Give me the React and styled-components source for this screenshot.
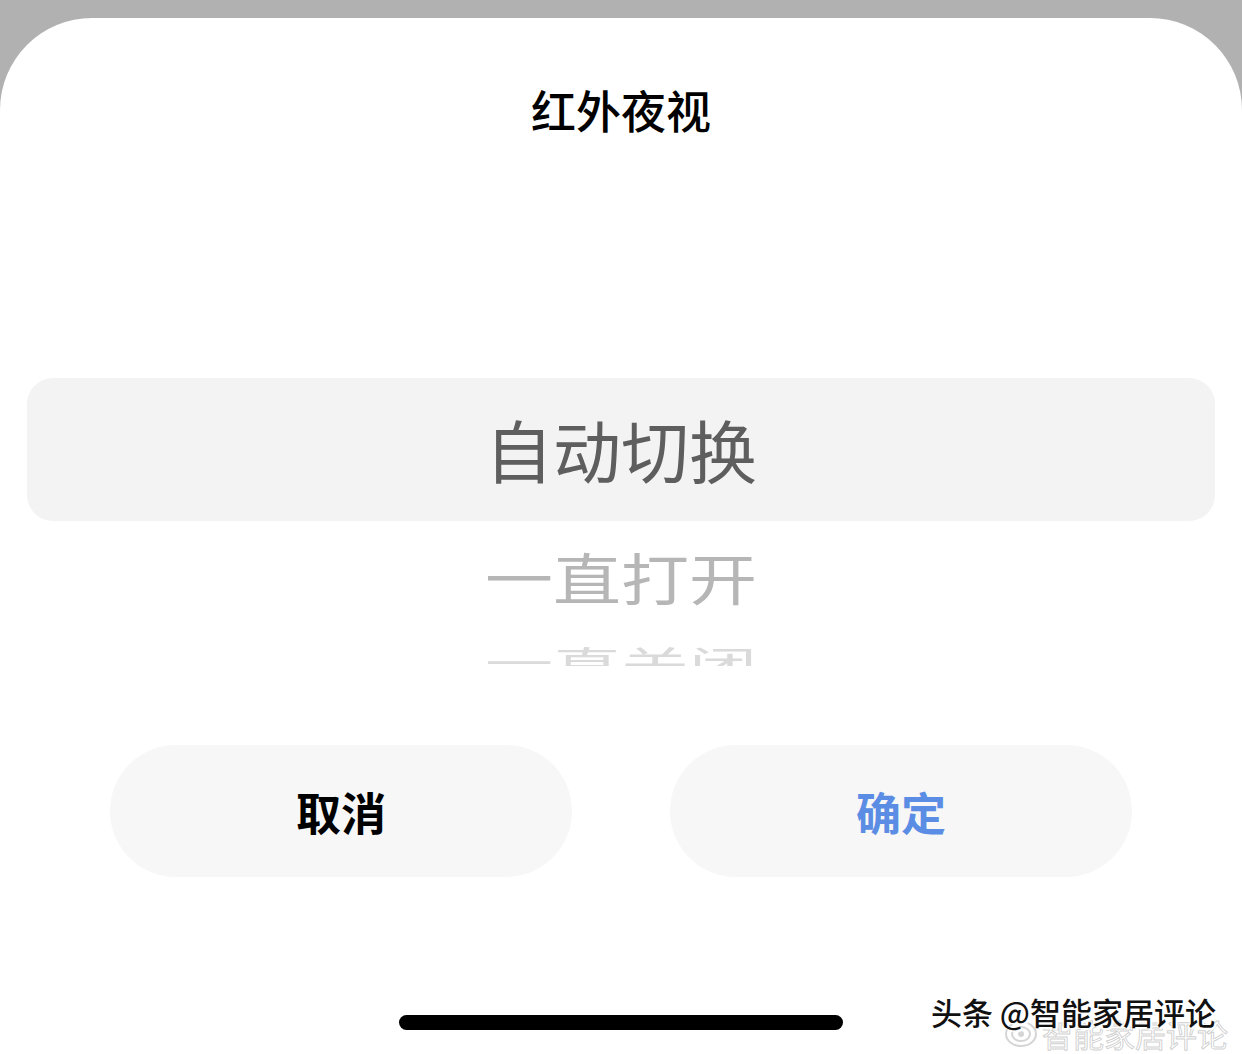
import styled, { createGlobalStyle } from "styled-components";

const GlobalStyle = createGlobalStyle`
  html, body {
    margin: 0;
    padding: 0;
    background: #b1b1b1;
    overflow: hidden;
  }
  body {
    font-family: "Noto Sans CJK SC", "Noto Sans", sans-serif;
  }
`;

const Sheet = styled.div`
  position: relative;
  margin-top: 18px;
  height: 1036px;
  background: #ffffff;
  border-radius: 92px 92px 0 0;
  display: flex;
  flex-direction: column;
  align-items: center;
  overflow: hidden;
`;

const Title = styled.div`
  padding-top: 66px;
  height: 118px;
  line-height: 52px;
  font-size: 45px;
  font-weight: 500;
  color: #000;
`;

// wheel picker: selected row sits on a grey band, the rest shrink and fade
const Picker = styled.div`
  align-self: stretch;
  height: 464px;
  padding-top: 176px;
  box-sizing: border-box;
  display: flex;
  flex-direction: column;
  overflow: hidden;
`;

const Selected = styled.div`
  flex: none;
  margin: 0 27px;
  height: 143px;
  border-radius: 26px;
  background: #f3f3f3;
  display: flex;
  align-items: center;
  justify-content: center;
  padding-bottom: 3px;
  box-sizing: border-box;
  font-size: 68px;
  color: #5e5e5e;
`;

const Option = styled.div`
  flex: none;
  height: ${({ $h }) => $h}px;
  display: flex;
  align-items: center;
  justify-content: center;
  font-size: 68px;
  color: ${({ $color }) => $color};
  transform: scaleY(${({ $scale }) => $scale});
`;

const Actions = styled.div`
  margin-top: 79px;
  display: flex;
  gap: 98px;
`;

const ActionButton = styled.button`
  width: 462px;
  height: 132px;
  border: none;
  border-radius: 66px;
  background: #f7f7f7;
  font-family: inherit;
  font-size: 45px;
  font-weight: 700;
  color: ${({ $primary }) => ($primary ? "#5b8de4" : "#000")};
  padding: 0;
`;

const HomeBar = styled.div`
  margin-top: 138px;
  width: 444px;
  height: 15px;
  border-radius: 8px;
  background: #000;
`;

const Mark = styled.div`
  position: absolute;
  right: 26px;
  bottom: 24px;
  font-size: 31px;
  line-height: 36px;
  font-weight: 500;
  color: #111;
  white-space: nowrap;
  text-shadow: 1px 1px 0 #fff, -1px -1px 0 #fff, 2px 2px 1px #fff;
`;

const MarkGhost = styled.div`
  position: absolute;
  right: 14px;
  bottom: 2px;
  display: flex;
  align-items: center;
  gap: 4px;
  font-size: 31px;
  line-height: 36px;
  color: rgba(255, 255, 255, 0.9);
  -webkit-text-stroke: 1px rgba(150, 150, 150, 0.45);
  white-space: nowrap;
`;

const options = [
  { label: "一直打开", h: 108, scale: 0.82, color: "#b6b6b6" },
  { label: "一直关闭", h: 64, scale: 0.5, color: "#dadada" },
];

export default function App() {
  return (
    <>
      <GlobalStyle />
      <Sheet>
        <Title>红外夜视</Title>
        <Picker>
          <Selected>自动切换</Selected>
          {options.map((o) => (
            <Option key={o.label} $h={o.h} $scale={o.scale} $color={o.color}>
              {o.label}
            </Option>
          ))}
        </Picker>
        <Actions>
          <ActionButton>取消</ActionButton>
          <ActionButton $primary>确定</ActionButton>
        </Actions>
        <HomeBar />
        <MarkGhost>
          <svg width="34" height="30" viewBox="0 0 34 30">
            <ellipse cx="17" cy="15" rx="15" ry="12" fill="none" stroke="rgba(150,150,150,0.4)" strokeWidth="2" />
            <ellipse cx="17" cy="15" rx="9" ry="7" fill="none" stroke="rgba(150,150,150,0.4)" strokeWidth="2" />
            <circle cx="17" cy="15" r="3" fill="rgba(150,150,150,0.4)" />
          </svg>
          智能家居评论
        </MarkGhost>
        <Mark>头条 @智能家居评论</Mark>
      </Sheet>
    </>
  );
}
